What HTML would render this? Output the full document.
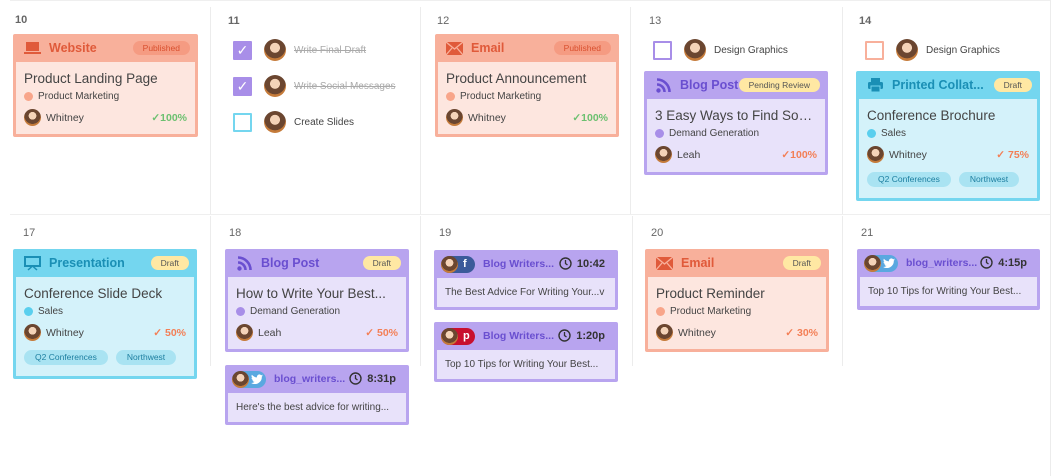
<!DOCTYPE html>
<html><head><meta charset="utf-8"><style>
*{box-sizing:border-box;margin:0;padding:0}
body{width:1063px;height:476px;background:#fff;font-family:"Liberation Sans",sans-serif;position:relative;overflow:hidden;color:#444}
.vl{position:absolute;width:1px;background:#ececec}
.hl{position:absolute;height:1px;background:#efefef}
.d{position:absolute;font-size:11px;color:#666}
.card{position:absolute;border-radius:2px;padding:0 3px 3px}
.hd{height:28px;display:flex;align-items:center;padding:0 5px 0 7px;position:relative}
.hd .ic{width:18px;height:14px;margin-right:8px;display:flex;align-items:center;justify-content:center}
.hd .lb{font-size:12.5px;font-weight:bold;white-space:nowrap}
.badge{position:absolute;right:5px;top:7px;height:14px;border-radius:7px;font-size:8.5px;line-height:14px;padding:0 10px}
.bd{padding:7px 8px 0 8px;position:relative}
.ti{font-size:13.5px;color:#444;margin-top:2px;white-space:nowrap;overflow:hidden;text-overflow:ellipsis}
.cat{font-size:10px;color:#444;margin-top:5px;display:flex;align-items:center}
.dot{width:9px;height:9px;border-radius:50%;margin-right:5px}
.pr{display:flex;align-items:center;margin-top:7px;font-size:10.5px;height:17px}
.av{width:17px;height:17px;border-radius:50%;background:radial-gradient(circle at 50% 40%,#f4d3b8 0 28%,#6b4630 30% 60%,#c57b3a 62%);margin-right:5px;flex:none}
.pct{position:absolute;right:8px;font-size:10.5px;font-weight:bold}
.tags{display:flex;gap:8px;margin-top:9px}
.tag{background:#a9e3f2;color:#1d7fa0;font-size:8.5px;border-radius:8px;height:15px;line-height:15px;padding:0 11px}
.sal{background:#f8b09b}.sal .bd{background:#fde6df}.sal .lb{color:#e05a3a}
.pur{background:#b8a4ef}.pur .bd{background:#e8e2fa}.pur .lb{color:#6a4fd0}
.blu{background:#74d6ef}.blu .bd{background:#d4f2fa}.blu .lb{color:#1a8fb5}
.pub{background:#f59b82;color:#d9502f}
.dr{background:#ffe8a3;color:#555}
.task{position:absolute;display:flex;align-items:center;font-size:10px}
.cb{width:19px;height:19px;border:2px solid;margin-right:12px;border-radius:1px;display:flex;align-items:center;justify-content:center}
.task .av{width:22px;height:22px;margin-right:8px}
.s{text-decoration:line-through;color:#aaa}
.soc .hd{padding-left:4px}
.sp{display:flex;align-items:center;height:17px;border-radius:9px;width:34px;margin-right:8px}
.sp .av{margin:0}
.sn{font-size:10.5px;font-weight:bold;color:#6a4fd0}
.tm{position:absolute;right:10px;top:7px;font-size:11px;font-weight:bold;color:#333;display:flex;align-items:center}
.tm svg{margin-right:5px}
.soc .bd{height:29px;padding:0 8px;font-size:10px;line-height:29px;white-space:nowrap}
</style></head><body>
<div class="vl" style="left:210px;top:7px;height:207px"></div>
<div class="vl" style="left:420px;top:7px;height:207px"></div>
<div class="vl" style="left:630px;top:7px;height:207px"></div>
<div class="vl" style="left:842px;top:7px;height:207px"></div>
<div class="vl" style="left:210px;top:216px;height:150px"></div>
<div class="vl" style="left:420px;top:216px;height:150px"></div>
<div class="vl" style="left:632px;top:216px;height:150px"></div>
<div class="vl" style="left:842px;top:216px;height:150px"></div>
<div class="vl" style="left:1050px;top:0;height:476px"></div>
<div class="hl" style="left:10px;top:0;width:1040px"></div>
<div class="hl" style="left:10px;top:214px;width:1040px"></div>

<div class="d" style="left:15px;top:14px;font-weight:bold">10</div>
<div class="d" style="left:228px;top:15px;font-weight:bold">11</div>
<div class="d" style="left:437px;top:15px">12</div>
<div class="d" style="left:649px;top:15px">13</div>
<div class="d" style="left:859px;top:15px;font-weight:bold">14</div>
<div class="d" style="left:23px;top:227px">17</div>
<div class="d" style="left:229px;top:227px">18</div>
<div class="d" style="left:439px;top:227px">19</div>
<div class="d" style="left:651px;top:227px">20</div>
<div class="d" style="left:861px;top:227px">21</div>

<!-- 10 -->
<div class="card sal" style="left:13px;top:34px;width:185px;height:103px">
<div class="hd"><div class="ic"><svg width="17" height="13"><rect x="2" y="0" width="13" height="9" fill="#e05a3a"/><rect x="0" y="10" width="17" height="2" fill="#e05a3a"/></svg></div><span class="lb">Website</span><span class="badge pub">Published</span></div>
<div class="bd" style="height:72px"><div class="ti">Product Landing Page</div><div class="cat"><span class="dot" style="background:#f8a58a"></span>Product Marketing</div><div class="pr"><span class="av"></span>Whitney<span class="pct" style="color:#6cc070">✓100%</span></div></div></div>

<!-- 11 tasks -->
<div class="task" style="left:233px;top:39px"><span class="cb" style="background:#a88ee8;border-color:#a88ee8;color:#fff;font-size:14px">✓</span><span class="av"></span><span class="s">Write Final Draft</span></div>
<div class="task" style="left:233px;top:75px"><span class="cb" style="background:#a88ee8;border-color:#a88ee8;color:#fff;font-size:14px">✓</span><span class="av"></span><span class="s">Write Social Messages</span></div>
<div class="task" style="left:233px;top:111px"><span class="cb" style="border-color:#74d6ef"></span><span class="av"></span><span>Create Slides</span></div>

<!-- 12 -->
<div class="card sal" style="left:435px;top:34px;width:184px;height:103px">
<div class="hd"><div class="ic"><svg width="17" height="13"><rect width="17" height="13" fill="#e05a3a"/><path d="M0 0L8.5 7L17 0M0 13L6 6M17 13L11 6" stroke="#f8b09b" stroke-width="1.3" fill="none"/></svg></div><span class="lb">Email</span><span class="badge pub">Published</span></div>
<div class="bd" style="height:72px"><div class="ti">Product Announcement</div><div class="cat"><span class="dot" style="background:#f8a58a"></span>Product Marketing</div><div class="pr"><span class="av"></span>Whitney<span class="pct" style="color:#6cc070">✓100%</span></div></div></div>

<!-- 13 -->
<div class="task" style="left:653px;top:39px"><span class="cb" style="border-color:#a88ee8"></span><span class="av"></span><span>Design Graphics</span></div>
<div class="card pur" style="left:644px;top:71px;width:184px;height:104px">
<div class="hd"><div class="ic"><svg width="15" height="15"><circle cx="2.5" cy="12.5" r="2.2" fill="#6a4fd0"/><path d="M1 6.5A7.5 7.5 0 0 1 8.5 14M1 1.5A12.5 12.5 0 0 1 13.5 14" stroke="#6a4fd0" stroke-width="2.6" fill="none"/></svg></div><span class="lb">Blog Post</span><span class="badge dr">Pending Review</span></div>
<div class="bd" style="height:73px"><div class="ti">3 Easy Ways to Find Social...</div><div class="cat"><span class="dot" style="background:#a88ee8"></span>Demand Generation</div><div class="pr"><span class="av"></span>Leah<span class="pct" style="color:#f37f56">✓100%</span></div></div></div>

<!-- 14 -->
<div class="task" style="left:865px;top:39px"><span class="cb" style="border-color:#f8b09b"></span><span class="av"></span><span>Design Graphics</span></div>
<div class="card blu" style="left:856px;top:71px;width:184px;height:130px">
<div class="hd"><div class="ic"><svg width="15" height="14"><rect x="3" y="0" width="9" height="4" fill="#1a8fb5"/><rect x="0" y="4" width="15" height="7" rx="1.5" fill="#1a8fb5"/><rect x="3" y="8" width="9" height="6" fill="#1a8fb5" stroke="#74d6ef"/></svg></div><span class="lb">Printed Collat...</span><span class="badge dr">Draft</span></div>
<div class="bd" style="height:99px"><div class="ti">Conference Brochure</div><div class="cat"><span class="dot" style="background:#5acfee"></span>Sales</div><div class="pr"><span class="av"></span>Whitney<span class="pct" style="color:#f37f56">✓ 75%</span></div><div class="tags"><span class="tag">Q2 Conferences</span><span class="tag">Northwest</span></div></div></div>

<!-- 17 -->
<div class="card blu" style="left:13px;top:249px;width:184px;height:130px">
<div class="hd"><div class="ic"><svg width="17" height="15"><rect x="1" y="1" width="15" height="9" fill="none" stroke="#1a8fb5" stroke-width="2"/><path d="M4 14L8.5 10L13 14" stroke="#1a8fb5" stroke-width="1.5" fill="none"/></svg></div><span class="lb">Presentation</span><span class="badge dr">Draft</span></div>
<div class="bd" style="height:99px"><div class="ti">Conference Slide Deck</div><div class="cat"><span class="dot" style="background:#5acfee"></span>Sales</div><div class="pr"><span class="av"></span>Whitney<span class="pct" style="color:#f37f56">✓ 50%</span></div><div class="tags"><span class="tag">Q2 Conferences</span><span class="tag">Northwest</span></div></div></div>

<!-- 18 -->
<div class="card pur" style="left:225px;top:249px;width:184px;height:103px">
<div class="hd"><div class="ic"><svg width="15" height="15"><circle cx="2.5" cy="12.5" r="2.2" fill="#6a4fd0"/><path d="M1 6.5A7.5 7.5 0 0 1 8.5 14M1 1.5A12.5 12.5 0 0 1 13.5 14" stroke="#6a4fd0" stroke-width="2.6" fill="none"/></svg></div><span class="lb">Blog Post</span><span class="badge dr">Draft</span></div>
<div class="bd" style="height:72px"><div class="ti">How to Write Your Best...</div><div class="cat"><span class="dot" style="background:#a88ee8"></span>Demand Generation</div><div class="pr"><span class="av"></span>Leah<span class="pct" style="color:#f37f56">✓ 50%</span></div></div></div>

<div class="card pur soc" style="left:225px;top:365px;width:184px;height:60px">
<div class="hd"><span class="sp" style="background:#5aa8e0"><span class="av"></span><svg width="12" height="10" style="margin-left:2px"><path d="M12 1.5c-.5.2-1 .3-1.4.4.5-.3.9-.8 1.1-1.3-.5.3-1 .5-1.6.6A2.4 2.4 0 0 0 6 3.4 7 7 0 0 1 .9.8a2.4 2.4 0 0 0 .7 3.3c-.4 0-.8-.1-1.1-.3 0 1.2.8 2.2 2 2.4-.4.1-.7.1-1.1 0 .3 1 1.2 1.7 2.3 1.7A5 5 0 0 1 0 8.9 7 7 0 0 0 10.8 2.6z" fill="#fff"/></svg></span><span class="sn">blog_writers...</span><span class="tm"><svg width="13" height="13"><circle cx="6.5" cy="6.5" r="5.5" fill="none" stroke="#333" stroke-width="1.4"/><path d="M6.5 3v3.5l2 1.5" stroke="#333" stroke-width="1.3" fill="none"/></svg>8:31p</span></div>
<div class="bd">Here's the best advice for writing...</div></div>

<!-- 19 -->
<div class="card pur soc" style="left:434px;top:250px;width:184px;height:60px">
<div class="hd"><span class="sp" style="background:#3b5b9a"><span class="av"></span><span style="color:#fff;font-size:11px;font-weight:bold;margin-left:5px">f</span></span><span class="sn">Blog Writers...</span><span class="tm"><svg width="13" height="13"><circle cx="6.5" cy="6.5" r="5.5" fill="none" stroke="#333" stroke-width="1.4"/><path d="M6.5 3v3.5l2 1.5" stroke="#333" stroke-width="1.3" fill="none"/></svg>10:42</span></div>
<div class="bd">The Best Advice For Writing Your...v</div></div>
<div class="card pur soc" style="left:434px;top:322px;width:184px;height:60px">
<div class="hd"><span class="sp" style="background:#c8102e"><span class="av"></span><span style="color:#fff;font-size:11px;font-weight:bold;margin-left:5px">p</span></span><span class="sn">Blog Writers...</span><span class="tm"><svg width="13" height="13"><circle cx="6.5" cy="6.5" r="5.5" fill="none" stroke="#333" stroke-width="1.4"/><path d="M6.5 3v3.5l2 1.5" stroke="#333" stroke-width="1.3" fill="none"/></svg>1:20p</span></div>
<div class="bd">Top 10 Tips for Writing Your Best...</div></div>

<!-- 20 -->
<div class="card sal" style="left:645px;top:249px;width:184px;height:103px">
<div class="hd"><div class="ic"><svg width="17" height="13"><rect width="17" height="13" fill="#e05a3a"/><path d="M0 0L8.5 7L17 0M0 13L6 6M17 13L11 6" stroke="#f8b09b" stroke-width="1.3" fill="none"/></svg></div><span class="lb">Email</span><span class="badge dr">Draft</span></div>
<div class="bd" style="height:72px"><div class="ti">Product Reminder</div><div class="cat"><span class="dot" style="background:#f8a58a"></span>Product Marketing</div><div class="pr"><span class="av"></span>Whitney<span class="pct" style="color:#f37f56">✓ 30%</span></div></div></div>

<!-- 21 -->
<div class="card pur soc" style="left:857px;top:249px;width:183px;height:61px">
<div class="hd"><span class="sp" style="background:#5aa8e0"><span class="av"></span><svg width="12" height="10" style="margin-left:2px"><path d="M12 1.5c-.5.2-1 .3-1.4.4.5-.3.9-.8 1.1-1.3-.5.3-1 .5-1.6.6A2.4 2.4 0 0 0 6 3.4 7 7 0 0 1 .9.8a2.4 2.4 0 0 0 .7 3.3c-.4 0-.8-.1-1.1-.3 0 1.2.8 2.2 2 2.4-.4.1-.7.1-1.1 0 .3 1 1.2 1.7 2.3 1.7A5 5 0 0 1 0 8.9 7 7 0 0 0 10.8 2.6z" fill="#fff"/></svg></span><span class="sn">blog_writers...</span><span class="tm"><svg width="13" height="13"><circle cx="6.5" cy="6.5" r="5.5" fill="none" stroke="#333" stroke-width="1.4"/><path d="M6.5 3v3.5l2 1.5" stroke="#333" stroke-width="1.3" fill="none"/></svg>4:15p</span></div>
<div class="bd">Top 10 Tips for Writing Your Best...</div></div>
</body></html>
